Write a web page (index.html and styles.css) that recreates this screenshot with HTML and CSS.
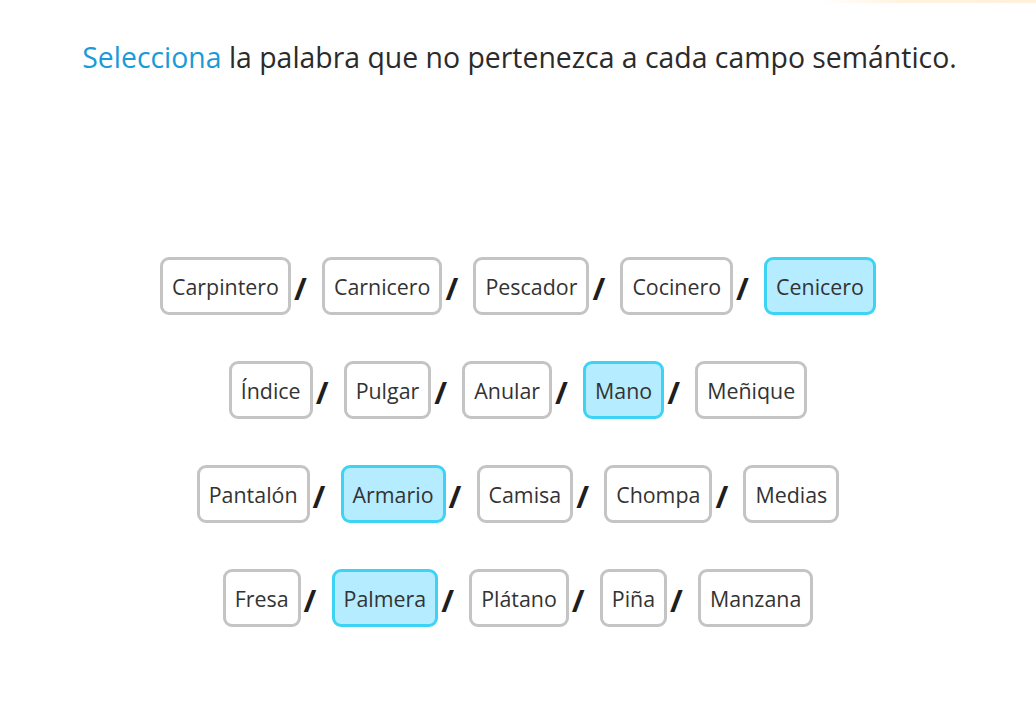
FILE: index.html
```html
<!DOCTYPE html>
<html lang="es">
<head>
<meta charset="utf-8">
<link rel="stylesheet" href="styles.css">
</head>
<body>
<div class="topglow"></div>
<main class="page">
  <h1 class="title"><span class="accent">Selecciona</span> la palabra que no pertenezca a cada campo semántico.</h1>
  <div class="rows">
    <div class="row">
      <span class="word">Carpintero</span><span class="sep">/</span>
      <span class="word">Carnicero</span><span class="sep">/</span>
      <span class="word">Pescador</span><span class="sep">/</span>
      <span class="word">Cocinero</span><span class="sep">/</span>
      <span class="word selected">Cenicero</span>
    </div>
    <div class="row">
      <span class="word">Índice</span><span class="sep">/</span>
      <span class="word">Pulgar</span><span class="sep">/</span>
      <span class="word">Anular</span><span class="sep">/</span>
      <span class="word selected">Mano</span><span class="sep">/</span>
      <span class="word">Meñique</span>
    </div>
    <div class="row">
      <span class="word">Pantalón</span><span class="sep">/</span>
      <span class="word selected">Armario</span><span class="sep">/</span>
      <span class="word">Camisa</span><span class="sep">/</span>
      <span class="word">Chompa</span><span class="sep">/</span>
      <span class="word">Medias</span>
    </div>
    <div class="row">
      <span class="word">Fresa</span><span class="sep">/</span>
      <span class="word selected">Palmera</span><span class="sep">/</span>
      <span class="word">Plátano</span><span class="sep">/</span>
      <span class="word">Piña</span><span class="sep">/</span>
      <span class="word">Manzana</span>
    </div>
  </div>
</main>
</body>
</html>
```

FILE: styles.css
```css
html, body {
  margin: 0;
  padding: 0;
  background: #ffffff;
}
body {
  font-family: "Open Sans", "Noto Sans", sans-serif;
  color: #333333;
  position: relative;
  width: 1036px;
  height: 727px;
  overflow: hidden;
}
.topglow {
  position: absolute;
  top: 0;
  right: 0;
  width: 220px;
  height: 3px;
  background: linear-gradient(to right, rgba(255,240,215,0), #fff3e0 40%, #fff1dc);
}
.page {
  display: flex;
  flex-direction: column;
  align-items: center;
  padding-top: 37px;
}
.title {
  margin: 0 0 0 3px;
  font-weight: 400;
  font-size: 28.4px;
  line-height: 40px;
  color: #2b2b2b;
  text-align: center;
  white-space: nowrap;
}
.accent {
  color: #1a9bd7;
}
.rows {
  margin-top: 180px;
  display: flex;
  flex-direction: column;
  align-items: center;
  gap: 46px;
}
.row {
  display: flex;
  align-items: center;
}
.word {
  box-sizing: border-box;
  height: 58px;
  display: flex;
  align-items: center;
  padding: 0 9px;
  border: 3px solid #c4c4c4;
  border-radius: 9px;
  background: #ffffff;
  font-size: 21.4px;
  color: #333333;
}
.word.selected {
  background: #b5ecff;
  border-color: #3dd3f4;
}
.sep {
  box-sizing: border-box;
  width: 31px;
  padding-left: 3px;
  text-align: left;
  font-size: 31px;
  font-weight: 700;
  color: #1e1e1e;
  line-height: 1;
  position: relative;
  top: 2px;
}
```
